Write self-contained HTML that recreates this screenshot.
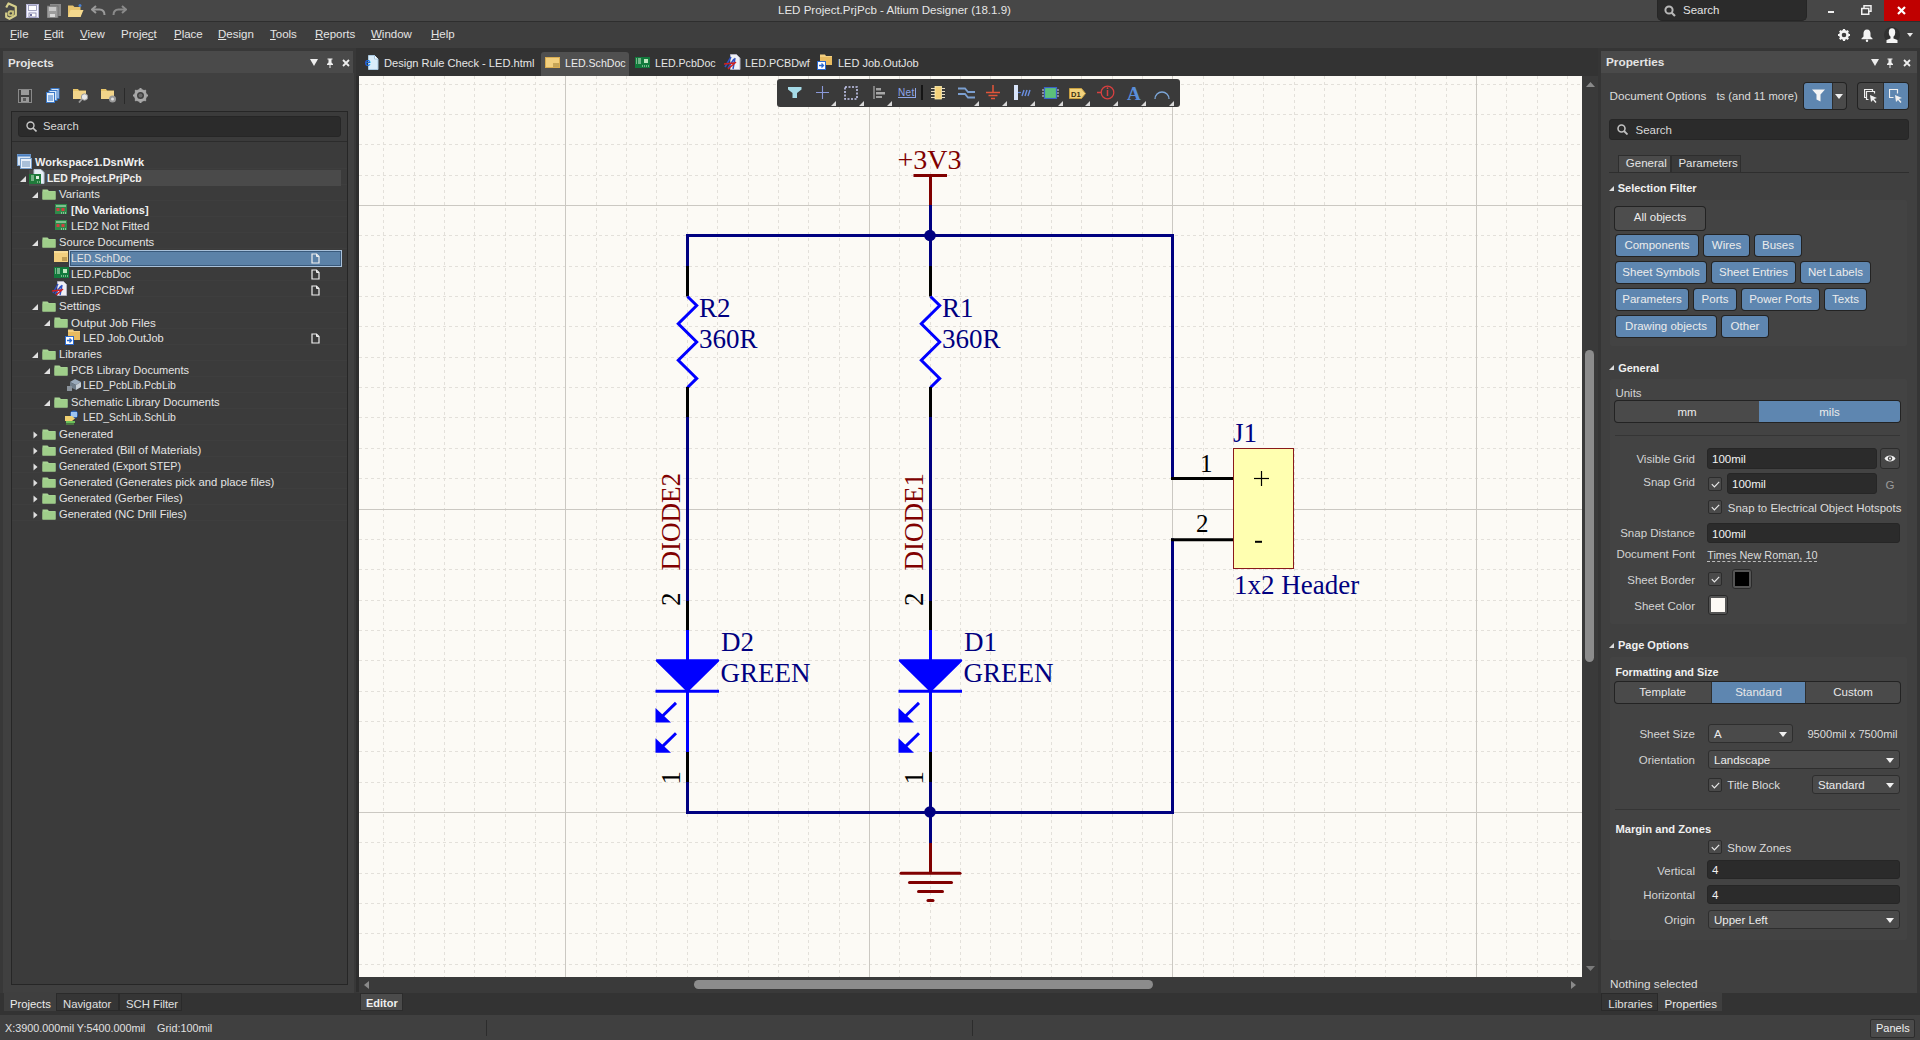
<!DOCTYPE html>
<html><head><meta charset="utf-8">
<style>
*{margin:0;padding:0;box-sizing:border-box}
html,body{width:1920px;height:1040px;overflow:hidden;background:#3c3c3c;font-family:"Liberation Sans",sans-serif;color:#e8e8e8;font-size:11.5px}
.a{position:absolute}
.t{position:absolute;white-space:nowrap;line-height:1}
</style></head><body>
<!-- title bar -->
<div class="a" style="left:0;top:0;width:1920px;height:21px;background:#474747"></div>
<div class="a" style="left:0;top:21px;width:1920px;height:1px;background:#2e2e2e"></div>
<!-- menu bar -->
<div class="a" style="left:0;top:22px;width:1920px;height:26px;background:#3e3e3e"></div>
<!-- left panel -->
<div class="a" style="left:0;top:48px;width:359px;height:945px;background:#383838"></div><div class="a" style="left:356px;top:76px;width:3px;height:916px;background:#2e2e2e"></div>
<div class="a" style="left:3px;top:51px;width:350px;height:22px;background:#4a4a4a"></div>
<div class="a" style="left:3px;top:73px;width:351px;height:920px;background:#404040"></div>
<div class="a" style="left:11px;top:111px;width:337px;height:874px;background:#3b3b3b;border:1px solid #262626"></div>
<!-- doc tab bar -->
<div class="a" style="left:356px;top:48px;width:1245px;height:28px;background:#333"></div>
<!-- canvas -->
<div class="a" style="left:1582px;top:76px;width:16px;height:917px;background:#3a3a3a"></div>
<div class="a" style="left:359px;top:977px;width:1223px;height:16px;background:#3a3a3a"></div>
<svg class="a" style="left:359px;top:76px" width="1223" height="901" viewBox="359 76 1223 901">
<rect x="359" y="76" width="1223" height="901" fill="#fcfaf5"/>
<path d="M383.5 76V977M414.5 76V977M444.5 76V977M474.5 76V977M505.5 76V977M535.5 76V977M596.5 76V977M626.5 76V977M656.5 76V977M687.5 76V977M717.5 76V977M748.5 76V977M778.5 76V977M808.5 76V977M839.5 76V977M899.5 76V977M930.5 76V977M960.5 76V977M990.5 76V977M1021.5 76V977M1051.5 76V977M1081.5 76V977M1112.5 76V977M1142.5 76V977M1203.5 76V977M1233.5 76V977M1263.5 76V977M1294.5 76V977M1324.5 76V977M1355.5 76V977M1385.5 76V977M1415.5 76V977M1446.5 76V977M1506.5 76V977M1537.5 76V977M1567.5 76V977M359 84.5H1582M359 114.5H1582M359 144.5H1582M359 175.5H1582M359 235.5H1582M359 266.5H1582M359 296.5H1582M359 326.5H1582M359 357.5H1582M359 387.5H1582M359 417.5H1582M359 448.5H1582M359 478.5H1582M359 539.5H1582M359 569.5H1582M359 600.5H1582M359 630.5H1582M359 660.5H1582M359 691.5H1582M359 721.5H1582M359 751.5H1582M359 782.5H1582M359 842.5H1582M359 873.5H1582M359 903.5H1582M359 933.5H1582M359 964.5H1582" stroke="#e3e0da" stroke-width="1" stroke-dasharray="3 3" fill="none"/>
<path d="M565.5 76V977M869.5 76V977M1172.5 76V977M1476.5 76V977M359 205.5H1582M359 509.5H1582M359 812.5H1582" stroke="#cbc8c2" stroke-width="1" fill="none"/>
<line x1="687.5" y1="235" x2="687.5" y2="266.5" stroke="#000080" stroke-width="3" stroke-linecap="butt"/>
<line x1="687.5" y1="266" x2="687.5" y2="296.5" stroke="#000000" stroke-width="3" stroke-linecap="butt"/>
<polyline points="687.5,296.5 696.7,305.5 678.3,323.7 696.7,342 678.3,360.2 696.7,378.4 687.5,387.5" fill="none" stroke="#0000ff" stroke-width="3" stroke-linejoin="miter"/>
<line x1="687.5" y1="387" x2="687.5" y2="417" stroke="#000000" stroke-width="3" stroke-linecap="butt"/>
<line x1="687.5" y1="417" x2="687.5" y2="601" stroke="#000080" stroke-width="3" stroke-linecap="butt"/>
<line x1="687.5" y1="601" x2="687.5" y2="630.5" stroke="#000000" stroke-width="3" stroke-linecap="butt"/>
<line x1="687.5" y1="630" x2="687.5" y2="752" stroke="#0000ff" stroke-width="3" stroke-linecap="butt"/>
<polygon points="657.0,660.5 718.0,660.5 687.5,690.5" fill="#0000ff" stroke="#0000ff" stroke-width="2.5" stroke-linejoin="round"/>
<line x1="655.5" y1="691.3" x2="719.0" y2="691.3" stroke="#0000ff" stroke-width="3" stroke-linecap="butt"/>
<line x1="676.0" y1="702.9" x2="661.5" y2="717" stroke="#0000ff" stroke-width="3" stroke-linecap="butt"/>
<polygon points="655.5,708.0 655.5,722.5 671.0,722.5" fill="#0000ff"/>
<line x1="676.0" y1="733.25" x2="661.5" y2="747.35" stroke="#0000ff" stroke-width="3" stroke-linecap="butt"/>
<polygon points="655.5,738.35 655.5,752.85 671.0,752.85" fill="#0000ff"/>
<line x1="687.5" y1="752" x2="687.5" y2="782.5" stroke="#000000" stroke-width="3" stroke-linecap="butt"/>
<line x1="687.5" y1="782" x2="687.5" y2="812" stroke="#000080" stroke-width="3" stroke-linecap="butt"/>
<text x="699.0" y="317" fill="#000080" font-size="27" font-family="Liberation Serif" >R2</text>
<text x="699.0" y="347.5" fill="#000080" font-size="27" font-family="Liberation Serif" >360R</text>
<text x="721.0" y="651.3" fill="#000080" font-size="27" font-family="Liberation Serif" >D2</text>
<text x="720.5" y="681.6" fill="#000080" font-size="27" font-family="Liberation Serif" >GREEN</text>
<text transform="translate(680.0,570.5) rotate(-90)" fill="#800000" font-size="27" font-family="Liberation Serif">DIODE2</text>
<text transform="translate(680.0,606) rotate(-90)" fill="#000000" font-size="27" font-family="Liberation Serif">2</text>
<text transform="translate(680.0,784.5) rotate(-90)" fill="#000000" font-size="27" font-family="Liberation Serif">1</text>
<line x1="930.5" y1="235" x2="930.5" y2="266.5" stroke="#000080" stroke-width="3" stroke-linecap="butt"/>
<line x1="930.5" y1="266" x2="930.5" y2="296.5" stroke="#000000" stroke-width="3" stroke-linecap="butt"/>
<polyline points="930.5,296.5 939.7,305.5 921.3,323.7 939.7,342 921.3,360.2 939.7,378.4 930.5,387.5" fill="none" stroke="#0000ff" stroke-width="3" stroke-linejoin="miter"/>
<line x1="930.5" y1="387" x2="930.5" y2="417" stroke="#000000" stroke-width="3" stroke-linecap="butt"/>
<line x1="930.5" y1="417" x2="930.5" y2="601" stroke="#000080" stroke-width="3" stroke-linecap="butt"/>
<line x1="930.5" y1="601" x2="930.5" y2="630.5" stroke="#000000" stroke-width="3" stroke-linecap="butt"/>
<line x1="930.5" y1="630" x2="930.5" y2="752" stroke="#0000ff" stroke-width="3" stroke-linecap="butt"/>
<polygon points="900.0,660.5 961.0,660.5 930.5,690.5" fill="#0000ff" stroke="#0000ff" stroke-width="2.5" stroke-linejoin="round"/>
<line x1="898.5" y1="691.3" x2="962.0" y2="691.3" stroke="#0000ff" stroke-width="3" stroke-linecap="butt"/>
<line x1="919.0" y1="702.9" x2="904.5" y2="717" stroke="#0000ff" stroke-width="3" stroke-linecap="butt"/>
<polygon points="898.5,708.0 898.5,722.5 914.0,722.5" fill="#0000ff"/>
<line x1="919.0" y1="733.25" x2="904.5" y2="747.35" stroke="#0000ff" stroke-width="3" stroke-linecap="butt"/>
<polygon points="898.5,738.35 898.5,752.85 914.0,752.85" fill="#0000ff"/>
<line x1="930.5" y1="752" x2="930.5" y2="782.5" stroke="#000000" stroke-width="3" stroke-linecap="butt"/>
<line x1="930.5" y1="782" x2="930.5" y2="812" stroke="#000080" stroke-width="3" stroke-linecap="butt"/>
<text x="942.0" y="317" fill="#000080" font-size="27" font-family="Liberation Serif" >R1</text>
<text x="942.0" y="347.5" fill="#000080" font-size="27" font-family="Liberation Serif" >360R</text>
<text x="964.0" y="651.3" fill="#000080" font-size="27" font-family="Liberation Serif" >D1</text>
<text x="963.5" y="681.6" fill="#000080" font-size="27" font-family="Liberation Serif" >GREEN</text>
<text transform="translate(923.0,570.5) rotate(-90)" fill="#800000" font-size="27" font-family="Liberation Serif">DIODE1</text>
<text transform="translate(923.0,606) rotate(-90)" fill="#000000" font-size="27" font-family="Liberation Serif">2</text>
<text transform="translate(923.0,784.5) rotate(-90)" fill="#000000" font-size="27" font-family="Liberation Serif">1</text>
<line x1="686" y1="235.5" x2="1173.5" y2="235.5" stroke="#000080" stroke-width="3" stroke-linecap="butt"/>
<line x1="686" y1="812.5" x2="1173.5" y2="812.5" stroke="#000080" stroke-width="3" stroke-linecap="butt"/>
<line x1="687.5" y1="234" x2="687.5" y2="266" stroke="#000080" stroke-width="3" stroke-linecap="butt"/>
<line x1="1172.5" y1="234" x2="1172.5" y2="480" stroke="#000080" stroke-width="3" stroke-linecap="butt"/>
<line x1="1172.5" y1="538.5" x2="1172.5" y2="814" stroke="#000080" stroke-width="3" stroke-linecap="butt"/>
<line x1="1171" y1="478.5" x2="1234" y2="478.5" stroke="#000000" stroke-width="3" stroke-linecap="butt"/>
<line x1="1171" y1="539.8" x2="1234" y2="539.8" stroke="#000000" stroke-width="3" stroke-linecap="butt"/>
<rect x="1233.5" y="448.5" width="60" height="120" fill="#ffffb0" stroke="#8a1a1a" stroke-width="1"/>
<text x="1200" y="471.5" fill="#000000" font-size="25" font-family="Liberation Serif" >1</text>
<text x="1196" y="531.8" fill="#000000" font-size="25" font-family="Liberation Serif" >2</text>
<line x1="1254" y1="478.5" x2="1269" y2="478.5" stroke="#000000" stroke-width="1.2" stroke-linecap="butt"/>
<line x1="1261.5" y1="471" x2="1261.5" y2="486" stroke="#000000" stroke-width="1.2" stroke-linecap="butt"/>
<line x1="1255" y1="541.8" x2="1262" y2="541.8" stroke="#000000" stroke-width="2" stroke-linecap="butt"/>
<text x="1233" y="441.5" fill="#000080" font-size="27" font-family="Liberation Serif" >J1</text>
<text x="1234" y="593.8" fill="#000080" font-size="27" font-family="Liberation Serif" >1x2 Header</text>
<line x1="929" y1="175.5" x2="932" y2="175.5" stroke="#800000" stroke-width="3" stroke-linecap="butt"/>
<line x1="913.5" y1="175.5" x2="947" y2="175.5" stroke="#800000" stroke-width="3" stroke-linecap="butt"/>
<line x1="930.5" y1="175" x2="930.5" y2="205.5" stroke="#800000" stroke-width="3" stroke-linecap="butt"/>
<line x1="930.5" y1="205" x2="930.5" y2="236" stroke="#000080" stroke-width="3" stroke-linecap="butt"/>
<text x="897.5" y="168.6" fill="#800000" font-size="28" font-family="Liberation Serif" >+3V3</text>
<circle cx="930" cy="235.5" r="5.8" fill="#000080"/>
<circle cx="930" cy="812" r="5.8" fill="#000080"/>
<line x1="930.5" y1="811" x2="930.5" y2="843.5" stroke="#000080" stroke-width="3" stroke-linecap="butt"/>
<line x1="930.5" y1="843" x2="930.5" y2="873.5" stroke="#800000" stroke-width="3" stroke-linecap="butt"/>
<line x1="901.0" y1="873.2" x2="960.0" y2="873.2" stroke="#800000" stroke-width="3" stroke-linecap="round"/>
<line x1="909.5" y1="882.4" x2="951.5" y2="882.4" stroke="#800000" stroke-width="3" stroke-linecap="round"/>
<line x1="918.5" y1="891.6" x2="942.5" y2="891.6" stroke="#800000" stroke-width="3" stroke-linecap="round"/>
<line x1="928.0" y1="900.6" x2="933.0" y2="900.6" stroke="#800000" stroke-width="3" stroke-linecap="round"/>
</svg>
<div class="a" style="left:777px;top:79px;width:403px;height:28px;background:#3a3a3a;border-radius:3px"></div>
<svg class="a" style="left:788px;top:87px" width="14" height="11" viewBox="0 0 14 11"><path d="M0 0h13.5v2.5l-4.5 3.5v5h-4.5v-5l-4.5-3.5z" fill="#a6dbe8"/></svg>
<svg class="a" style="left:816px;top:86px" width="13" height="13" viewBox="0 0 13 13"><path d="M0 6.5h13M6.5 0v13" stroke="#8a98d8" stroke-width="1.1"/></svg>
<svg class="a" style="left:831px;top:101px" width="5" height="5" viewBox="0 0 5 5"><path d="M5 0v5h-5z" fill="#d8d8d8"/></svg>
<svg class="a" style="left:844px;top:86px" width="14" height="14" viewBox="0 0 14 14"><rect x="1" y="1" width="12" height="12" fill="none" stroke="#c4c8ee" stroke-width="1.6" stroke-dasharray="2 1.5"/></svg>
<svg class="a" style="left:859px;top:101px" width="5" height="5" viewBox="0 0 5 5"><path d="M5 0v5h-5z" fill="#d8d8d8"/></svg>
<svg class="a" style="left:873px;top:86px" width="12" height="13" viewBox="0 0 12 13"><path d="M1 0v13" stroke="#909090" stroke-width="1.6"/><rect x="3" y="2" width="5" height="2.5" fill="#a0a0a0"/><rect x="3" y="6" width="9" height="2.5" fill="#a8a8a8"/><rect x="3" y="10" width="6" height="2" fill="#a0a0a0"/></svg>
<svg class="a" style="left:887px;top:101px" width="5" height="5" viewBox="0 0 5 5"><path d="M5 0v5h-5z" fill="#d8d8d8"/></svg>
<div class="t" style="left:898px;top:88px;font-size:10px;font-weight:normal;color:#8ea6e8;letter-spacing:0.3px">Net</div>
<div class="a" style="left:898px;top:97px;width:18px;height:1px;background:#8ea6e8"></div>
<div class="a" style="left:915px;top:88px;width:1px;height:10px;background:#8ea6e8"></div>
<div class="a" style="left:921px;top:85px;width:2px;height:15px;background:#151515"></div>
<svg class="a" style="left:931px;top:86px" width="14" height="14" viewBox="0 0 14 14"><rect x="4" y="0.5" width="6.5" height="12.5" fill="#f5d27a" stroke="#fff0b0" stroke-width="0.8"/><path d="M0 2.5h4M0 5.5h4M0 8.5h4M0 11.5h4M10.5 2.5h3.5M10.5 5.5h3.5M10.5 8.5h3.5M10.5 11.5h3.5" stroke="#e8dcc0" stroke-width="1"/></svg>
<svg class="a" style="left:958px;top:87px" width="17" height="12" viewBox="0 0 17 12"><path d="M0 1.5h7l3 3.5h7M0 7h7l3 3.5h7" fill="none" stroke="#7b9fd0" stroke-width="1.8"/></svg>
<svg class="a" style="left:974px;top:101px" width="5" height="5" viewBox="0 0 5 5"><path d="M5 0v5h-5z" fill="#d8d8d8"/></svg>
<svg class="a" style="left:985px;top:85px" width="16" height="15" viewBox="0 0 16 15"><path d="M8 0v7M1 7.5h14M3.5 10.5h9M6 13.5h4" stroke="#e2553a" stroke-width="1.5"/></svg>
<svg class="a" style="left:1002px;top:101px" width="5" height="5" viewBox="0 0 5 5"><path d="M5 0v5h-5z" fill="#d8d8d8"/></svg>
<svg class="a" style="left:1013px;top:85px" width="19" height="15" viewBox="0 0 19 15"><rect x="1" y="0" width="4" height="15" fill="#d8e4fa"/><path d="M5 7.5h3" stroke="#5a80d8" stroke-width="1.2"/><path d="M9 11l2-6M12 11l2-6M15 11l2-6" stroke="#6a8ee0" stroke-width="1.4"/></svg>
<svg class="a" style="left:1030px;top:101px" width="5" height="5" viewBox="0 0 5 5"><path d="M5 0v5h-5z" fill="#d8d8d8"/></svg>
<svg class="a" style="left:1042px;top:87px" width="17" height="12" viewBox="0 0 17 12"><rect x="2.5" y="0.5" width="12" height="11" fill="#5cc07a" stroke="#3a62c8" stroke-width="1.2"/><path d="M0 3h2M0 6h2M0 9h2M15 3h2M15 6h2M15 9h2" stroke="#d0d8f0"/></svg>
<svg class="a" style="left:1058px;top:101px" width="5" height="5" viewBox="0 0 5 5"><path d="M5 0v5h-5z" fill="#d8d8d8"/></svg>
<svg class="a" style="left:1069px;top:88px" width="18" height="11" viewBox="0 0 18 11"><path d="M0.5 0.5h12l4 5-4 5h-12z" fill="#f2d27c" stroke="#c8a040"/><text x="2" y="8.5" font-size="7.5" font-family="Liberation Sans" font-weight="bold" fill="#3a3010">D1</text></svg>
<svg class="a" style="left:1085px;top:101px" width="5" height="5" viewBox="0 0 5 5"><path d="M5 0v5h-5z" fill="#d8d8d8"/></svg>
<svg class="a" style="left:1097px;top:85px" width="18" height="15" viewBox="0 0 18 15"><circle cx="10.5" cy="7.5" r="6.3" fill="none" stroke="#d84040" stroke-width="1.3"/><path d="M0 7.5h4M10.5 5v6" stroke="#d84040" stroke-width="1.5"/><circle cx="10.5" cy="3.2" r="0.9" fill="#d84040"/></svg>
<svg class="a" style="left:1113px;top:101px" width="5" height="5" viewBox="0 0 5 5"><path d="M5 0v5h-5z" fill="#d8d8d8"/></svg>
<div class="t" style="left:1127px;top:84px;font-family:'Liberation Serif';font-size:19px;font-weight:bold;color:#5a8ed8">A</div>
<svg class="a" style="left:1141px;top:101px" width="5" height="5" viewBox="0 0 5 5"><path d="M5 0v5h-5z" fill="#d8d8d8"/></svg>
<svg class="a" style="left:1154px;top:86px" width="16" height="13" viewBox="0 0 16 13"><path d="M1 13a7 7 0 0 1 14 0" fill="none" stroke="#7ca6d8" stroke-width="1.3"/></svg>
<svg class="a" style="left:1169px;top:101px" width="5" height="5" viewBox="0 0 5 5"><path d="M5 0v5h-5z" fill="#d8d8d8"/></svg>
<svg class="a" style="left:1586px;top:82px" width="9" height="5" viewBox="0 0 9 5"><path d="M0 5l4.5-5 4.5 5z" fill="#8a8a8a"/></svg>
<div class="a" style="left:1585px;top:350px;width:9px;height:312px;background:#8c8c8c;border-radius:4.5px"></div>
<svg class="a" style="left:1586px;top:966px" width="9" height="5" viewBox="0 0 9 5"><path d="M0 0h9l-4.5 5z" fill="#7a7a7a"/></svg>
<svg class="a" style="left:364px;top:981px" width="5" height="8" viewBox="0 0 5 8"><path d="M5 0v8l-5-4z" fill="#8a8a8a"/></svg>
<div class="a" style="left:694px;top:980px;width:459px;height:9px;background:#8c8c8c;border-radius:4.5px"></div>
<svg class="a" style="left:1571px;top:981px" width="5" height="8" viewBox="0 0 5 8"><path d="M0 0v8l5-4z" fill="#8a8a8a"/></svg>
<!-- scrollbars -->
<!-- bottom tabs -->
<div class="a" style="left:0;top:993px;width:1920px;height:22px;background:#333"></div>
<!-- status bar -->
<div class="a" style="left:0;top:1015px;width:1920px;height:25px;background:#404040"></div>
<div class="t" style="left:8px;top:56.5px;font-size:11.6px;font-weight:bold;color:#e4e4e4">Projects</div>
<svg class="a" style="left:310px;top:59px" width="8" height="7" viewBox="0 0 8 7"><path d="M0 0h8l-4 7z" fill="#eee"/></svg>
<svg class="a" style="left:326px;top:58px" width="8" height="10" viewBox="0 0 8 10"><path d="M1.5 0.5h5v1h-1v3l1.5 1.5v1h-6v-1l1.5-1.5v-3h-1z" fill="#eee"/><path d="M4 7v3" stroke="#eee"/></svg>
<svg class="a" style="left:342px;top:59px" width="8" height="8" viewBox="0 0 8 8"><path d="M1 1l6 6M7 1l-6 6" stroke="#eee" stroke-width="1.8"/></svg>
<svg class="a" style="left:18px;top:89px" width="14" height="14" viewBox="0 0 14 14"><rect x="0.5" y="0.5" width="13" height="13" fill="none" stroke="#8a8a8a"/><rect x="3" y="1" width="8" height="5" fill="#9a9a9a"/><rect x="3" y="8" width="8" height="5" fill="#9a9a9a"/><rect x="5" y="9" width="3" height="3" fill="#5a5a5a"/></svg>
<svg class="a" style="left:46px;top:88px" width="14" height="15" viewBox="0 0 14 15"><rect x="5" y="0.5" width="8" height="10" fill="#cfe0f5" stroke="#3a78c8"/><rect x="3" y="2.5" width="8" height="10" fill="#d8e8f8" stroke="#3a78c8"/><rect x="0.5" y="4.5" width="8" height="10" fill="#e8f2fc" stroke="#3a78c8"/><path d="M2 8h5M2 10h5M2 12h5" stroke="#3a78c8"/></svg>
<svg class="a" style="left:73px;top:88px" width="16" height="15" viewBox="0 0 16 15"><path d="M0 1h5l1 1.5h7v8.5h-13z" fill="#e8c56a"/><rect x="0" y="3" width="13" height="8" fill="#f3d58a"/><circle cx="11.5" cy="9" r="3.2" fill="#e8e8e8" stroke="#9a9a9a"/><path d="M9 11l-3 3.5" stroke="#9a9a9a" stroke-width="1.8"/></svg>
<svg class="a" style="left:101px;top:88px" width="16" height="15" viewBox="0 0 16 15"><path d="M0 1h5l1 1.5h7v8.5h-13z" fill="#e8c56a"/><rect x="0" y="3" width="13" height="8" fill="#f3d58a"/><circle cx="11.5" cy="11" r="3.5" fill="#9a9a9a"/><circle cx="11.5" cy="11" r="1.5" fill="#e0e0e0"/></svg>
<div class="a" style="left:124px;top:88px;width:1px;height:16px;background:#2a2a2a"></div>
<svg class="a" style="left:133px;top:88px" width="15" height="15" viewBox="0 0 15 15"><circle cx="7.5" cy="7.5" r="5" fill="none" stroke="#a8a8a8" stroke-width="3"/><path d="M7.5 0v3M7.5 12v3M0 7.5h3M12 7.5h3M2.2 2.2l2 2M10.8 10.8l2 2M2.2 12.8l2-2M10.8 4.2l2-2" stroke="#a8a8a8" stroke-width="2"/><circle cx="7.5" cy="7.5" r="2" fill="#6a6a6a"/></svg>
<div class="a" style="left:18px;top:116px;width:323px;height:21px;background:#2b2b2b;border-radius:3px;border:1px solid #262626"></div>
<svg class="a" style="left:26px;top:121px" width="11" height="11" viewBox="0 0 11 11"><circle cx="4.5" cy="4.5" r="3.5" fill="none" stroke="#c8c8c8" stroke-width="1.4"/><path d="M7 7l3.5 3.5" stroke="#c8c8c8" stroke-width="1.6"/></svg>
<div class="t" style="left:43px;top:121px;font-size:11.3px;color:#d8d8d8">Search</div>
<div class="a" style="left:12px;top:141px;width:335px;height:1px;background:#2c2c2c"></div>
<div class="a" style="left:12px;top:168px;width:335px;height:1px;background:#3e3e3e"></div>
<div class="a" style="left:12px;top:184px;width:335px;height:1px;background:#3e3e3e"></div>
<div class="a" style="left:12px;top:200px;width:335px;height:1px;background:#3e3e3e"></div>
<div class="a" style="left:12px;top:216px;width:335px;height:1px;background:#3e3e3e"></div>
<div class="a" style="left:12px;top:232px;width:335px;height:1px;background:#3e3e3e"></div>
<div class="a" style="left:12px;top:248px;width:335px;height:1px;background:#3e3e3e"></div>
<div class="a" style="left:12px;top:264px;width:335px;height:1px;background:#3e3e3e"></div>
<div class="a" style="left:12px;top:280px;width:335px;height:1px;background:#3e3e3e"></div>
<div class="a" style="left:12px;top:296px;width:335px;height:1px;background:#3e3e3e"></div>
<div class="a" style="left:12px;top:312px;width:335px;height:1px;background:#3e3e3e"></div>
<div class="a" style="left:12px;top:328px;width:335px;height:1px;background:#3e3e3e"></div>
<div class="a" style="left:12px;top:344px;width:335px;height:1px;background:#3e3e3e"></div>
<div class="a" style="left:12px;top:360px;width:335px;height:1px;background:#3e3e3e"></div>
<div class="a" style="left:12px;top:376px;width:335px;height:1px;background:#3e3e3e"></div>
<div class="a" style="left:12px;top:392px;width:335px;height:1px;background:#3e3e3e"></div>
<div class="a" style="left:12px;top:408px;width:335px;height:1px;background:#3e3e3e"></div>
<div class="a" style="left:12px;top:424px;width:335px;height:1px;background:#3e3e3e"></div>
<div class="a" style="left:12px;top:440px;width:335px;height:1px;background:#3e3e3e"></div>
<div class="a" style="left:12px;top:456px;width:335px;height:1px;background:#3e3e3e"></div>
<div class="a" style="left:12px;top:472px;width:335px;height:1px;background:#3e3e3e"></div>
<div class="a" style="left:12px;top:488px;width:335px;height:1px;background:#3e3e3e"></div>
<div class="a" style="left:12px;top:504px;width:335px;height:1px;background:#3e3e3e"></div>
<div class="a" style="left:12px;top:520px;width:335px;height:1px;background:#3e3e3e"></div>
<div class="a" style="left:29px;top:170px;width:312px;height:16px;background:#4a4a4a"></div>
<div class="a" style="left:69px;top:250px;width:273px;height:17px;background:#5c82a8;border:1px solid #a9c1da;box-shadow:inset 0 0 0 1px #3a5a7c"></div>
<div class="t" style="left:35px;top:157px;font-size:11px;font-weight:bold;color:#f0f0f0">Workspace1.DsnWrk</div>
<svg class="a" style="left:17px;top:154px" width="16" height="16" viewBox="0 0 16 16"><rect x="0.5" y="0.5" width="13" height="11" fill="#d8e6f5" stroke="#7aa0cc"/><rect x="0.5" y="0.5" width="13" height="2" fill="#4a7fc0"/><rect x="3.5" y="4.5" width="11" height="10" fill="#e8f0fa" stroke="#7aa0cc"/><path d="M5 8h8M5 10h8M5 12h8" stroke="#6a8fb8"/></svg>
<div class="t" style="left:47px;top:174px;font-size:10.4px;font-weight:bold;color:#f0f0f0">LED Project.PrjPcb</div>
<svg class="a" style="left:20px;top:176px" width="6" height="6" viewBox="0 0 6 6"><path d="M6 0v6h-6z" fill="#e0e0e0"/></svg>
<svg class="a" style="left:29px;top:169px" width="16" height="16" viewBox="0 0 16 16"><path d="M5 0.5h7l3 3v11h-10z" fill="#e8eef5" stroke="#b8c8d8"/><rect x="0" y="5" width="12" height="10" fill="#1f7a3a"/><path d="M2 7h3M2 9h3M2 11h3M8 13h1M10 13h1" stroke="#cfe8cf"/><rect x="7" y="7" width="3" height="3" fill="#dff0df"/></svg>
<div class="t" style="left:59px;top:189px;font-size:11.4px;font-weight:normal;color:#e4e4e4">Variants</div>
<svg class="a" style="left:32px;top:192px" width="6" height="6" viewBox="0 0 6 6"><path d="M6 0v6h-6z" fill="#e0e0e0"/></svg>
<svg class="a" style="left:42px;top:188px" width="14" height="12" viewBox="0 0 14 12"><path d="M0.5 1.5h5l1.5 1.5h6.5v8.5h-13z" fill="#a9d595"/><path d="M0.5 3.5h13v8h-13z" fill="#9fce8a"/></svg>
<div class="t" style="left:71px;top:205px;font-size:11px;font-weight:bold;color:#f0f0f0">[No Variations]</div>
<svg class="a" style="left:55px;top:204px" width="13" height="11" viewBox="0 0 13 11"><rect x="0" y="0" width="12" height="10" fill="#2e8a4a"/><rect x="1" y="1" width="10" height="2" fill="#7fbf8f"/><rect x="1.5" y="4" width="3" height="3" fill="#d04040"/><rect x="6.5" y="4" width="3" height="3" fill="#d04040"/><path d="M6 9h1M8 9h1M10 9h1" stroke="#e0f0e0"/></svg>
<div class="t" style="left:71px;top:221px;font-size:11px;font-weight:normal;color:#e4e4e4">LED2 Not Fitted</div>
<svg class="a" style="left:55px;top:220px" width="13" height="11" viewBox="0 0 13 11"><rect x="0" y="0" width="12" height="10" fill="#2e8a4a"/><rect x="1" y="1" width="10" height="2" fill="#7fbf8f"/><rect x="1.5" y="4" width="3" height="3" fill="#d04040"/><rect x="6.5" y="4" width="3" height="3" fill="#d04040"/><path d="M6 9h1M8 9h1M10 9h1" stroke="#e0f0e0"/></svg>
<div class="t" style="left:59px;top:237px;font-size:11.2px;font-weight:normal;color:#e4e4e4">Source Documents</div>
<svg class="a" style="left:32px;top:240px" width="6" height="6" viewBox="0 0 6 6"><path d="M6 0v6h-6z" fill="#e0e0e0"/></svg>
<svg class="a" style="left:42px;top:236px" width="14" height="12" viewBox="0 0 14 12"><path d="M0.5 1.5h5l1.5 1.5h6.5v8.5h-13z" fill="#a9d595"/><path d="M0.5 3.5h13v8h-13z" fill="#9fce8a"/></svg>
<div class="t" style="left:71px;top:253px;font-size:10.5px;font-weight:normal;color:#e4e4e4">LED.SchDoc</div>
<svg class="a" style="left:54px;top:251px" width="15" height="12" viewBox="0 0 15 12"><rect x="0" y="0" width="14" height="11" fill="#f2cf7e"/><rect x="0" y="0" width="14" height="2" fill="#f7dc98"/><path d="M8 7h5M8 9h5" stroke="#8a6a2a"/></svg>
<svg class="a" style="left:311px;top:253px" width="9" height="11" viewBox="0 0 9 11"><path d="M1 1h4.5l2.5 2.5v6.5h-7z" fill="none" stroke="#f0f0f0" stroke-width="1.2"/><path d="M5.5 1v2.5h2.5" fill="none" stroke="#f0f0f0" stroke-width="1"/></svg>
<div class="t" style="left:71px;top:269px;font-size:10.5px;font-weight:normal;color:#e4e4e4">LED.PcbDoc</div>
<svg class="a" style="left:54px;top:267px" width="15" height="12" viewBox="0 0 15 12"><rect x="0" y="0" width="15" height="11" fill="#127a3c"/><path d="M1 2h1M1 4h1M1 6h1M3 2h3M3 4h3M3 6h3M7 9h1M9 9h1M11 9h1M13 9h1" stroke="#d8f0d8"/><rect x="9" y="2" width="4" height="4" fill="#bfe6bf"/></svg>
<svg class="a" style="left:311px;top:269px" width="9" height="11" viewBox="0 0 9 11"><path d="M1 1h4.5l2.5 2.5v6.5h-7z" fill="none" stroke="#f0f0f0" stroke-width="1.2"/><path d="M5.5 1v2.5h2.5" fill="none" stroke="#f0f0f0" stroke-width="1"/></svg>
<div class="t" style="left:71px;top:285px;font-size:10.5px;font-weight:normal;color:#e4e4e4">LED.PCBDwf</div>
<svg class="a" style="left:52px;top:281px" width="16" height="16" viewBox="0 0 16 16"><path d="M5.5 0.5h6l3 3v11h-9z" fill="#f0f0f5" stroke="#b0b0c0"/><path d="M1 12l5-9M3 13l6-8M8 14l2-10" stroke="#3050c0" stroke-width="1.5"/><path d="M0 10l9-1M4 14l7-6" stroke="#d02020" stroke-width="1.5"/></svg>
<svg class="a" style="left:311px;top:285px" width="9" height="11" viewBox="0 0 9 11"><path d="M1 1h4.5l2.5 2.5v6.5h-7z" fill="none" stroke="#f0f0f0" stroke-width="1.2"/><path d="M5.5 1v2.5h2.5" fill="none" stroke="#f0f0f0" stroke-width="1"/></svg>
<div class="t" style="left:59px;top:301px;font-size:11.5px;font-weight:normal;color:#e4e4e4">Settings</div>
<svg class="a" style="left:32px;top:304px" width="6" height="6" viewBox="0 0 6 6"><path d="M6 0v6h-6z" fill="#e0e0e0"/></svg>
<svg class="a" style="left:42px;top:300px" width="14" height="12" viewBox="0 0 14 12"><path d="M0.5 1.5h5l1.5 1.5h6.5v8.5h-13z" fill="#a9d595"/><path d="M0.5 3.5h13v8h-13z" fill="#9fce8a"/></svg>
<div class="t" style="left:71px;top:317px;font-size:11.65px;font-weight:normal;color:#e4e4e4">Output Job Files</div>
<svg class="a" style="left:44px;top:320px" width="6" height="6" viewBox="0 0 6 6"><path d="M6 0v6h-6z" fill="#e0e0e0"/></svg>
<svg class="a" style="left:54px;top:316px" width="14" height="12" viewBox="0 0 14 12"><path d="M0.5 1.5h5l1.5 1.5h6.5v8.5h-13z" fill="#a9d595"/><path d="M0.5 3.5h13v8h-13z" fill="#9fce8a"/></svg>
<div class="t" style="left:83px;top:333px;font-size:11px;font-weight:normal;color:#e4e4e4">LED Job.OutJob</div>
<svg class="a" style="left:65px;top:329px" width="16" height="16" viewBox="0 0 16 16"><path d="M3 0.5h5l1 1.5h6v9h-12z" fill="#f3cf80"/><rect x="3" y="3" width="12" height="8" fill="#e8bb60"/><rect x="0.5" y="7.5" width="8" height="8" fill="#ffffff" stroke="#2a6ad0"/><path d="M2 11.5h4M4.5 9.5l2 2-2 2" stroke="#2a6ad0" stroke-width="1.3" fill="none"/></svg>
<svg class="a" style="left:311px;top:333px" width="9" height="11" viewBox="0 0 9 11"><path d="M1 1h4.5l2.5 2.5v6.5h-7z" fill="none" stroke="#f0f0f0" stroke-width="1.2"/><path d="M5.5 1v2.5h2.5" fill="none" stroke="#f0f0f0" stroke-width="1"/></svg>
<div class="t" style="left:59px;top:349px;font-size:11.2px;font-weight:normal;color:#e4e4e4">Libraries</div>
<svg class="a" style="left:32px;top:352px" width="6" height="6" viewBox="0 0 6 6"><path d="M6 0v6h-6z" fill="#e0e0e0"/></svg>
<svg class="a" style="left:42px;top:348px" width="14" height="12" viewBox="0 0 14 12"><path d="M0.5 1.5h5l1.5 1.5h6.5v8.5h-13z" fill="#a9d595"/><path d="M0.5 3.5h13v8h-13z" fill="#9fce8a"/></svg>
<div class="t" style="left:71px;top:365px;font-size:11px;font-weight:normal;color:#e4e4e4">PCB Library Documents</div>
<svg class="a" style="left:44px;top:368px" width="6" height="6" viewBox="0 0 6 6"><path d="M6 0v6h-6z" fill="#e0e0e0"/></svg>
<svg class="a" style="left:54px;top:364px" width="14" height="12" viewBox="0 0 14 12"><path d="M0.5 1.5h5l1.5 1.5h6.5v8.5h-13z" fill="#a9d595"/><path d="M0.5 3.5h13v8h-13z" fill="#9fce8a"/></svg>
<div class="t" style="left:83px;top:381px;font-size:10.44px;font-weight:normal;color:#e4e4e4">LED_PcbLib.PcbLib</div>
<svg class="a" style="left:67px;top:378px" width="14" height="13" viewBox="0 0 14 13"><path d="M3 4l5-3 6 3-5 3z" fill="#9aaabb"/><path d="M3 4v5l6 3v-5z" fill="#6f7d8a"/><path d="M9 7l5-3v5l-5 3z" fill="#c5cdd5"/><rect x="0" y="8" width="5" height="5" fill="#8a939c"/></svg>
<div class="t" style="left:71px;top:397px;font-size:11.15px;font-weight:normal;color:#e4e4e4">Schematic Library Documents</div>
<svg class="a" style="left:44px;top:400px" width="6" height="6" viewBox="0 0 6 6"><path d="M6 0v6h-6z" fill="#e0e0e0"/></svg>
<svg class="a" style="left:54px;top:396px" width="14" height="12" viewBox="0 0 14 12"><path d="M0.5 1.5h5l1.5 1.5h6.5v8.5h-13z" fill="#a9d595"/><path d="M0.5 3.5h13v8h-13z" fill="#9fce8a"/></svg>
<div class="t" style="left:83px;top:413px;font-size:10.44px;font-weight:normal;color:#e4e4e4">LED_SchLib.SchLib</div>
<svg class="a" style="left:65px;top:410px" width="14" height="15" viewBox="0 0 14 15"><circle cx="9" cy="4.5" r="4" fill="#2a60b0"/><rect x="6" y="2" width="6" height="5" fill="#9cc4f0"/><path d="M0 6h7l3 2.5-3 2.5h-7z" fill="#f0d070"/><path d="M2 12v3M4 12v3M6 12v3M8 12v3" stroke="#5ab04a"/><rect x="1" y="11" width="9" height="2" fill="#6ac05a"/></svg>
<div class="t" style="left:59px;top:429px;font-size:11.47px;font-weight:normal;color:#e4e4e4">Generated</div>
<svg class="a" style="left:33px;top:431px" width="5" height="8" viewBox="0 0 5 8"><path d="M0.5 0.5l4 3.5-4 3.5z" fill="#e0e0e0"/></svg>
<svg class="a" style="left:42px;top:428px" width="14" height="12" viewBox="0 0 14 12"><path d="M0.5 1.5h5l1.5 1.5h6.5v8.5h-13z" fill="#a9d595"/><path d="M0.5 3.5h13v8h-13z" fill="#9fce8a"/></svg>
<div class="t" style="left:59px;top:445px;font-size:11.43px;font-weight:normal;color:#e4e4e4">Generated (Bill of Materials)</div>
<svg class="a" style="left:33px;top:447px" width="5" height="8" viewBox="0 0 5 8"><path d="M0.5 0.5l4 3.5-4 3.5z" fill="#e0e0e0"/></svg>
<svg class="a" style="left:42px;top:444px" width="14" height="12" viewBox="0 0 14 12"><path d="M0.5 1.5h5l1.5 1.5h6.5v8.5h-13z" fill="#a9d595"/><path d="M0.5 3.5h13v8h-13z" fill="#9fce8a"/></svg>
<div class="t" style="left:59px;top:461px;font-size:10.66px;font-weight:normal;color:#e4e4e4">Generated (Export STEP)</div>
<svg class="a" style="left:33px;top:463px" width="5" height="8" viewBox="0 0 5 8"><path d="M0.5 0.5l4 3.5-4 3.5z" fill="#e0e0e0"/></svg>
<svg class="a" style="left:42px;top:460px" width="14" height="12" viewBox="0 0 14 12"><path d="M0.5 1.5h5l1.5 1.5h6.5v8.5h-13z" fill="#a9d595"/><path d="M0.5 3.5h13v8h-13z" fill="#9fce8a"/></svg>
<div class="t" style="left:59px;top:477px;font-size:11.3px;font-weight:normal;color:#e4e4e4">Generated (Generates pick and place files)</div>
<svg class="a" style="left:33px;top:479px" width="5" height="8" viewBox="0 0 5 8"><path d="M0.5 0.5l4 3.5-4 3.5z" fill="#e0e0e0"/></svg>
<svg class="a" style="left:42px;top:476px" width="14" height="12" viewBox="0 0 14 12"><path d="M0.5 1.5h5l1.5 1.5h6.5v8.5h-13z" fill="#a9d595"/><path d="M0.5 3.5h13v8h-13z" fill="#9fce8a"/></svg>
<div class="t" style="left:59px;top:493px;font-size:11.08px;font-weight:normal;color:#e4e4e4">Generated (Gerber Files)</div>
<svg class="a" style="left:33px;top:495px" width="5" height="8" viewBox="0 0 5 8"><path d="M0.5 0.5l4 3.5-4 3.5z" fill="#e0e0e0"/></svg>
<svg class="a" style="left:42px;top:492px" width="14" height="12" viewBox="0 0 14 12"><path d="M0.5 1.5h5l1.5 1.5h6.5v8.5h-13z" fill="#a9d595"/><path d="M0.5 3.5h13v8h-13z" fill="#9fce8a"/></svg>
<div class="t" style="left:59px;top:509px;font-size:11.12px;font-weight:normal;color:#e4e4e4">Generated (NC Drill Files)</div>
<svg class="a" style="left:33px;top:511px" width="5" height="8" viewBox="0 0 5 8"><path d="M0.5 0.5l4 3.5-4 3.5z" fill="#e0e0e0"/></svg>
<svg class="a" style="left:42px;top:508px" width="14" height="12" viewBox="0 0 14 12"><path d="M0.5 1.5h5l1.5 1.5h6.5v8.5h-13z" fill="#a9d595"/><path d="M0.5 3.5h13v8h-13z" fill="#9fce8a"/></svg>
<div class="a" style="left:4px;top:992px;width:52px;height:19px;background:#3f3f3f"></div>
<div class="t" style="left:10px;top:999px;font-size:11.3px;color:#ececec">Projects</div>
<div class="a" style="left:56px;top:993px;width:63px;height:18px;background:#353535;border:1px solid #2a2a2a"></div>
<div class="t" style="left:63px;top:999px;font-size:11.3px;color:#e0e0e0">Navigator</div>
<div class="a" style="left:119px;top:993px;width:63px;height:18px;background:#353535;border:1px solid #2a2a2a"></div>
<div class="t" style="left:126px;top:999px;font-size:11.3px;color:#e0e0e0">SCH Filter</div>
<svg class="a" style="left:5px;top:2px" width="12" height="18" viewBox="0 0 12 18"><path d="M1.2 5.5L3.5 1.5L10.8 4.8V13.2L4.5 16.8L1.2 15V10.5" fill="none" stroke="#d6cf8c" stroke-width="2.2" stroke-linejoin="round"/><path d="M8 8.5V12.5M8 10.2c-1-1.5-4.5-1.5-4.5 1.2c0 2.5 3.5 2.5 4.5 0.8" fill="none" stroke="#c9c27a" stroke-width="1.9"/></svg>
<svg class="a" style="left:26px;top:4px" width="13" height="14" viewBox="0 0 13 14"><rect x="0.5" y="0.5" width="12" height="13" fill="#f4f4ff" stroke="#b8b8d8"/><rect x="2.5" y="1.5" width="8" height="5" fill="#ffffff" stroke="#9090b0" stroke-width="0.8"/><rect x="3" y="9" width="7" height="4" fill="#ffffff" stroke="#7a7aa0" stroke-width="0.8"/><rect x="4" y="10" width="2" height="2" fill="#7070a0"/></svg>
<svg class="a" style="left:47px;top:4px" width="14" height="14" viewBox="0 0 14 14"><rect x="3" y="0" width="11" height="12" fill="#8a8a8a"/><rect x="0" y="2" width="11" height="12" fill="#9c9c9c" stroke="#6a6a6a" stroke-width="0.8"/><rect x="2" y="3" width="7" height="4" fill="#c8c8c8"/><rect x="3" y="10" width="5" height="3" fill="#d8d8d8"/></svg>
<svg class="a" style="left:68px;top:3px" width="16" height="15" viewBox="0 0 16 15"><path d="M0 2.5h5l1.5 1.5h6v10h-12.5z" fill="#e8c46e"/><path d="M2.5 7h13l-3 7h-12.5z" fill="#f5d98e"/><circle cx="12" cy="2.5" r="1.5" fill="#4a80d0"/></svg>
<svg class="a" style="left:91px;top:5px" width="15" height="11" viewBox="0 0 15 11"><path d="M5 1l-4 3.5 4 3.5" fill="none" stroke="#9a9a9a" stroke-width="2"/><path d="M1.5 4.5h7c3 0 5 2 5 5.5" fill="none" stroke="#9a9a9a" stroke-width="2"/></svg>
<svg class="a" style="left:112px;top:5px" width="15" height="11" viewBox="0 0 15 11"><path d="M10 1l4 3.5-4 3.5" fill="none" stroke="#8a8a8a" stroke-width="2"/><path d="M13.5 4.5h-7c-3 0-5 2-5 5.5" fill="none" stroke="#8a8a8a" stroke-width="2"/></svg>
<div class="t" style="left:778px;top:5px;font-size:11.55px;color:#e6e6e6">LED Project.PrjPcb - Altium Designer (18.1.9)</div>
<div class="a" style="left:1657px;top:0;width:150px;height:21px;background:#2b2b2b;border-radius:0 0 5px 5px;border:1px solid #262626;border-top:none"></div>
<svg class="a" style="left:1664px;top:5px" width="12" height="12" viewBox="0 0 12 12"><circle cx="5" cy="5" r="3.6" fill="none" stroke="#b8b8b8" stroke-width="2"/><path d="M7.5 7.5l3.5 3.5" stroke="#b8b8b8" stroke-width="2.2"/></svg>
<div class="t" style="left:1683px;top:5px;font-size:11.5px;color:#e4e4e4">Search</div>
<div class="a" style="left:1828px;top:11px;width:6px;height:2px;background:#f0f0f0"></div>
<svg class="a" style="left:1861px;top:5px" width="11" height="10" viewBox="0 0 11 10"><rect x="3" y="0.75" width="7" height="5.5" fill="none" stroke="#f0f0f0" stroke-width="1.5"/><rect x="0.75" y="3.5" width="7" height="5.75" fill="#474747" stroke="#f0f0f0" stroke-width="1.5"/></svg>
<div class="a" style="left:1884px;top:0;width:36px;height:21px;background:#c00000"></div>
<svg class="a" style="left:1897px;top:6px" width="9" height="9" viewBox="0 0 9 9"><path d="M1 1l7 7M8 1l-7 7" stroke="#ffffff" stroke-width="2.2"/></svg>
<div class="t" style="left:10px;top:29px;font-size:11.5px;color:#e4e4e4"><span style="text-decoration:underline">F</span>ile</div>
<div class="t" style="left:44px;top:29px;font-size:11.5px;color:#e4e4e4"><span style="text-decoration:underline">E</span>dit</div>
<div class="t" style="left:80px;top:29px;font-size:11.5px;color:#e4e4e4"><span style="text-decoration:underline">V</span>iew</div>
<div class="t" style="left:121px;top:29px;font-size:11.5px;color:#e4e4e4">Proje<span style="text-decoration:underline">c</span>t</div>
<div class="t" style="left:174px;top:29px;font-size:11.5px;color:#e4e4e4"><span style="text-decoration:underline">P</span>lace</div>
<div class="t" style="left:218px;top:29px;font-size:11.5px;color:#e4e4e4"><span style="text-decoration:underline">D</span>esign</div>
<div class="t" style="left:270px;top:29px;font-size:11.5px;color:#e4e4e4"><span style="text-decoration:underline">T</span>ools</div>
<div class="t" style="left:315px;top:29px;font-size:11.5px;color:#e4e4e4"><span style="text-decoration:underline">R</span>eports</div>
<div class="t" style="left:371px;top:29px;font-size:11.5px;color:#e4e4e4"><span style="text-decoration:underline">W</span>indow</div>
<div class="t" style="left:431px;top:29px;font-size:11.5px;color:#e4e4e4"><span style="text-decoration:underline">H</span>elp</div>
<svg class="a" style="left:1838px;top:29px" width="12" height="12" viewBox="0 0 12 12"><circle cx="6" cy="6" r="3.6" fill="none" stroke="#f4f4f4" stroke-width="2.6"/><path d="M6 0v3M6 9v3M0 6h3M9 6h3M1.8 1.8l2 2M8.2 8.2l2 2M1.8 10.2l2-2M8.2 3.8l2-2" stroke="#f4f4f4" stroke-width="2.2"/></svg>
<svg class="a" style="left:1861px;top:29px" width="12" height="13" viewBox="0 0 12 13"><path d="M6 0.5c-2.5 0-3.5 2-3.5 4v3l-2 2v0.8h11v-0.8l-2-2v-3c0-2-1-4-3.5-4z" fill="#f4f4f4"/><circle cx="6" cy="11.8" r="1.2" fill="#f4f4f4"/></svg>
<div class="a" style="left:1884px;top:27px;width:16px;height:16px;border-radius:8px;background:#303030"></div>
<svg class="a" style="left:1886px;top:28px" width="12" height="15" viewBox="0 0 12 15"><ellipse cx="6" cy="4.5" rx="3.2" ry="4.2" fill="#f4f4f4"/><path d="M4.5 8h3v2.5l4 1.5v3h-11v-3l4-1.5z" fill="#f4f4f4"/></svg>
<svg class="a" style="left:1907px;top:33px" width="6" height="4" viewBox="0 0 6 4"><path d="M0 0h6l-3 4z" fill="#e8e8e8"/></svg>
<div class="a" style="left:541px;top:52px;width:88px;height:24px;background:#505050;border-radius:3px 3px 0 0"></div>
<svg class="a" style="left:365px;top:55px" width="14" height="15" viewBox="0 0 14 15"><path d="M3.5 0.5h6l3.5 3.5v10.5h-9.5z" fill="#d8ecfa" stroke="#a8c8e0"/><path d="M9.5 0.5v3.5h3.5" fill="#ffffff" stroke="#a8c8e0"/><text x="0" y="11" font-family="Liberation Sans" font-weight="bold" font-size="10" fill="#1a6ad8">e</text></svg>
<div class="t" style="left:384px;top:58px;font-size:11.1px;color:#e6e6e6">Design Rule Check - LED.html</div>
<svg class="a" style="left:545px;top:57px" width="15" height="11" viewBox="0 0 15 11"><rect x="0" y="0" width="15" height="11" fill="#f2cf7e"/><rect x="0.5" y="0.5" width="14" height="10" fill="none" stroke="#d9ac50"/><path d="M8 7h6M8 9h6" stroke="#9a7a30"/></svg>
<div class="t" style="left:565px;top:58px;font-size:10.6px;color:#ececec">LED.SchDoc</div>
<svg class="a" style="left:635px;top:57px" width="15" height="11" viewBox="0 0 15 11"><rect x="0" y="0" width="15" height="11" fill="#127a3c"/><path d="M1 2h1M1 4h1M1 6h1M3 2h3M3 4h3M3 6h3M7 9h1M9 9h1M11 9h1M13 9h1" stroke="#d8f0d8"/><rect x="9" y="2" width="4" height="4" fill="#bfe6bf"/></svg>
<div class="t" style="left:655px;top:58px;font-size:10.6px;color:#e6e6e6">LED.PcbDoc</div>
<svg class="a" style="left:724px;top:54px" width="17" height="16" viewBox="0 0 17 16"><path d="M6.5 0.5h6l3.5 3.5v11.5h-9.5z" fill="#f0f0f5" stroke="#b0b0c0"/><path d="M1 13l6-10M4 14l6-9M9 15l2-11" stroke="#3050c0" stroke-width="1.5"/><path d="M0 10l10-1M4 15l8-7" stroke="#d02020" stroke-width="1.5"/></svg>
<div class="t" style="left:745px;top:58px;font-size:10.8px;color:#e6e6e6">LED.PCBDwf</div>
<svg class="a" style="left:817px;top:54px" width="16" height="16" viewBox="0 0 16 16"><path d="M3 0.5h5l1 1.5h6v9h-12z" fill="#f3cf80"/><rect x="3" y="3" width="12" height="8" fill="#e8bb60"/><rect x="0.5" y="7.5" width="8" height="8" fill="#ffffff" stroke="#2a6ad0"/><path d="M2 11.5h4M4.5 9.5l2 2-2 2" stroke="#2a6ad0" stroke-width="1.3" fill="none"/></svg>
<div class="t" style="left:838px;top:58px;font-size:11px;color:#e6e6e6">LED Job.OutJob</div>
<div class="a" style="left:360px;top:993px;width:43px;height:18px;background:#4b4b4b;border:1px solid #2c2c2c"></div>
<div class="t" style="left:366px;top:998px;font-size:11px;font-weight:bold;color:#f0f0f0">Editor</div>
<div class="t" style="left:5px;top:1023px;font-size:10.8px;color:#e0e0e0">X:3900.000mil Y:5400.000mil</div>
<div class="t" style="left:157px;top:1023px;font-size:10.8px;color:#e0e0e0">Grid:100mil</div>
<div class="a" style="left:486px;top:1020px;width:1px;height:16px;background:#2c2c2c"></div>
<div class="a" style="left:972px;top:1020px;width:1px;height:16px;background:#2c2c2c"></div>
<div class="a" style="left:1870px;top:1019px;width:45px;height:19px;background:#4a4a4a;border:1px solid #2c2c2c;border-radius:2px"></div>
<div class="t" style="left:1876px;top:1023px;font-size:11px;color:#f0f0f0">Panels</div>
<!-- right panel -->
<div class="a" style="left:1598px;top:48px;width:322px;height:945px;background:#353535"></div>
<div class="a" style="left:1601px;top:51px;width:316px;height:22px;background:#4a4a4a"></div>
<div class="a" style="left:1601px;top:73px;width:316px;height:920px;background:#404040"></div>
<div class="t" style="left:1606px;top:57.31px;font-size:11.8px;color:#e4e4e4;font-weight:bold;">Properties</div>
<svg class="a" style="left:1871px;top:59px" width="8" height="7" viewBox="0 0 8 7"><path d="M0 0h8l-4 7z" fill="#eee"/></svg>
<svg class="a" style="left:1886px;top:58px" width="8" height="10" viewBox="0 0 8 10"><path d="M1.5 0.5h5v1h-1v3l1.5 1.5v1h-6v-1l1.5-1.5v-3h-1z" fill="#eee"/><path d="M4 7v3" stroke="#eee"/></svg>
<svg class="a" style="left:1903px;top:59px" width="8" height="8" viewBox="0 0 8 8"><path d="M1 1l6 6M7 1l-6 6" stroke="#eee" stroke-width="1.8"/></svg>
<div class="t" style="left:1609.5px;top:90.3px;font-size:11.7px;color:#dcdcdc;">Document Options</div>
<div class="t" style="left:1716.5px;top:90.72px;font-size:11.2px;color:#dcdcdc;">ts (and 11 more)</div>
<div class="a" style="left:1804px;top:83px;width:42px;height:26px;background:#4a4a4a;border-radius:3px;box-shadow:0 0 0 1px #232323"></div>
<div class="a" style="left:1804px;top:83px;width:28px;height:26px;background:#5e86b0;border-radius:3px 0 0 3px"></div>
<div class="a" style="left:1832px;top:83px;width:1px;height:26px;background:#2e2e2e;"></div>
<svg class="a" style="left:1812px;top:89px" width="13" height="13" viewBox="0 0 13 13"><path d="M0 0.5h13l-4.5 5v7l-4-2v-5z" fill="#f4f4f4"/></svg>
<svg class="a" style="left:1835px;top:94px" width="8" height="5" viewBox="0 0 8 5"><path d="M0 0h8l-4 5z" fill="#f0f0f0"/></svg>
<div class="a" style="left:1858px;top:83px;width:50px;height:26px;background:#474747;border-radius:3px;box-shadow:0 0 0 1px #232323"></div>
<div class="a" style="left:1884px;top:83px;width:24px;height:26px;background:#5e86b0;border-radius:0 3px 3px 0"></div>
<div class="a" style="left:1883px;top:83px;width:1px;height:26px;background:#2e2e2e;"></div>
<svg class="a" style="left:1864px;top:89px" width="14" height="14" viewBox="0 0 14 14"><path d="M2.5 8.5h-2v-8h8v2" fill="none" stroke="#f0f0f0" stroke-width="1.2"/><path d="M4.5 10.5h-2v-8h8v2" fill="none" stroke="#f0f0f0" stroke-width="1.2"/><path d="M6 6l7 3-3 1 2.5 3-1 1-2.5-3-2 2z" fill="#f0f0f0"/></svg>
<svg class="a" style="left:1889px;top:89px" width="14" height="14" viewBox="0 0 14 14"><path d="M4.5 8.5h-4v-8h8v4" fill="none" stroke="#f0f0f0" stroke-width="1.2"/><path d="M6 6l7 3-3 1 2.5 3-1 1-2.5-3-2 2z" fill="#f0f0f0"/></svg>
<div class="a" style="left:1609px;top:119px;width:300px;height:21px;background:#2b2b2b;border-radius:3px;border:1px solid #262626"></div>
<svg class="a" style="left:1617px;top:124px" width="11" height="11" viewBox="0 0 11 11"><circle cx="4.5" cy="4.5" r="3.5" fill="none" stroke="#c0c0c0" stroke-width="1.6"/><path d="M7 7l3.5 3.5" stroke="#c0c0c0" stroke-width="1.8"/></svg>
<div class="t" style="left:1635.5px;top:124.57px;font-size:11.5px;color:#d8d8d8;">Search</div>
<div class="a" style="left:1618px;top:155px;width:53px;height:18px;background:#4b4b4b;border:1px solid #2e2e2e;border-bottom:none"></div>
<div class="a" style="left:1671px;top:155px;width:70px;height:18px;background:#3a3a3a;border:1px solid #2e2e2e;border-bottom:none"></div>
<div class="t" style="left:1625.8px;top:158.37px;font-size:11.5px;color:#e4e4e4;">General</div>
<div class="t" style="left:1678.4px;top:158.37px;font-size:11.5px;color:#e4e4e4;">Parameters</div>
<div class="a" style="left:1609px;top:172px;width:300px;height:1px;background:#2e2e2e;"></div>
<svg class="a" style="left:1609px;top:186px" width="5" height="5" viewBox="0 0 5 5"><path d="M5 0v5h-5z" fill="#dcdcdc"/></svg>
<div class="t" style="left:1617.7px;top:183.49px;font-size:11px;color:#f0f0f0;font-weight:bold;">Selection Filter</div>
<div class="a" style="left:1610px;top:200px;width:297px;height:146px;background:#434343;border-radius:2px"></div>
<div class="a" style="left:1615px;top:207px;width:90px;height:23px;background:#4d4d4d;border-radius:3px;box-shadow:0 0 0 1px #232323"></div><div class="t" style="left:1560.0px;width:200px;text-align:center;top:212.17px;font-size:11.5px;color:#ececec;">All objects</div>
<div class="a" style="left:1616px;top:235px;width:82px;height:21px;background:#5e86b0;border-radius:3px;box-shadow:0 0 0 1px #232323"></div><div class="t" style="left:1557.0px;width:200px;text-align:center;top:239.87px;font-size:11.5px;color:#ececec;">Components</div>
<div class="a" style="left:1704px;top:235px;width:45px;height:21px;background:#5e86b0;border-radius:3px;box-shadow:0 0 0 1px #232323"></div><div class="t" style="left:1626.5px;width:200px;text-align:center;top:239.87px;font-size:11.5px;color:#ececec;">Wires</div>
<div class="a" style="left:1755px;top:235px;width:46px;height:21px;background:#5e86b0;border-radius:3px;box-shadow:0 0 0 1px #232323"></div><div class="t" style="left:1678.0px;width:200px;text-align:center;top:239.87px;font-size:11.5px;color:#ececec;">Buses</div>
<div class="a" style="left:1616px;top:262px;width:90px;height:21px;background:#5e86b0;border-radius:3px;box-shadow:0 0 0 1px #232323"></div><div class="t" style="left:1561.0px;width:200px;text-align:center;top:266.87px;font-size:11.5px;color:#ececec;">Sheet Symbols</div>
<div class="a" style="left:1712px;top:262px;width:83px;height:21px;background:#5e86b0;border-radius:3px;box-shadow:0 0 0 1px #232323"></div><div class="t" style="left:1653.5px;width:200px;text-align:center;top:266.87px;font-size:11.5px;color:#ececec;">Sheet Entries</div>
<div class="a" style="left:1801px;top:262px;width:69px;height:21px;background:#5e86b0;border-radius:3px;box-shadow:0 0 0 1px #232323"></div><div class="t" style="left:1735.5px;width:200px;text-align:center;top:266.87px;font-size:11.5px;color:#ececec;">Net Labels</div>
<div class="a" style="left:1616px;top:289px;width:72px;height:21px;background:#5e86b0;border-radius:3px;box-shadow:0 0 0 1px #232323"></div><div class="t" style="left:1552.0px;width:200px;text-align:center;top:293.87px;font-size:11.5px;color:#ececec;">Parameters</div>
<div class="a" style="left:1694px;top:289px;width:42px;height:21px;background:#5e86b0;border-radius:3px;box-shadow:0 0 0 1px #232323"></div><div class="t" style="left:1615.0px;width:200px;text-align:center;top:293.87px;font-size:11.5px;color:#ececec;">Ports</div>
<div class="a" style="left:1742px;top:289px;width:77px;height:21px;background:#5e86b0;border-radius:3px;box-shadow:0 0 0 1px #232323"></div><div class="t" style="left:1680.5px;width:200px;text-align:center;top:293.87px;font-size:11.5px;color:#ececec;">Power Ports</div>
<div class="a" style="left:1825px;top:289px;width:41px;height:21px;background:#5e86b0;border-radius:3px;box-shadow:0 0 0 1px #232323"></div><div class="t" style="left:1745.5px;width:200px;text-align:center;top:293.87px;font-size:11.5px;color:#ececec;">Texts</div>
<div class="a" style="left:1616px;top:316px;width:100px;height:21px;background:#5e86b0;border-radius:3px;box-shadow:0 0 0 1px #232323"></div><div class="t" style="left:1566.0px;width:200px;text-align:center;top:320.87px;font-size:11.5px;color:#ececec;">Drawing objects</div>
<div class="a" style="left:1722px;top:316px;width:46px;height:21px;background:#5e86b0;border-radius:3px;box-shadow:0 0 0 1px #232323"></div><div class="t" style="left:1645.0px;width:200px;text-align:center;top:320.87px;font-size:11.5px;color:#ececec;">Other</div>
<svg class="a" style="left:1609px;top:365px" width="5" height="5" viewBox="0 0 5 5"><path d="M5 0v5h-5z" fill="#dcdcdc"/></svg>
<div class="t" style="left:1618.2px;top:362.69px;font-size:11px;color:#f0f0f0;font-weight:bold;">General</div>
<div class="a" style="left:1610px;top:379px;width:297px;height:245px;background:#434343;border-radius:2px"></div>
<div class="t" style="left:1615.4px;top:387.57px;font-size:11.5px;color:#d4d4d4;">Units</div>
<div class="a" style="left:1615px;top:401px;width:285px;height:21px;background:#4a4a4a;border-radius:3px;box-shadow:0 0 0 1px #232323"></div>
<div class="a" style="left:1759px;top:401px;width:141px;height:21px;background:#5e86b0;border-radius:0 3px 3px 0"></div>
<div class="t" style="left:1587px;width:200px;text-align:center;top:406.57px;font-size:11.5px;color:#ececec;">mm</div>
<div class="t" style="left:1729.5px;width:200px;text-align:center;top:406.57px;font-size:11.5px;color:#ececec;">mils</div>
<div class="a" style="left:1615px;top:435px;width:285px;height:1px;background:#353535;"></div>
<div class="t" style="right:225px;top:454.07px;font-size:11.5px;color:#d4d4d4">Visible Grid</div>
<div class="a" style="left:1707px;top:448px;width:170px;height:21px;background:#2b2b2b;border-radius:3px;border:1px solid #262626"></div><div class="t" style="left:1712px;top:454.07px;font-size:11.5px;color:#f2f2f2;">100mil</div>
<div class="a" style="left:1880px;top:448px;width:20px;height:21px;background:#474747;border-radius:3px;border:1px solid #2c2c2c"></div>
<svg class="a" style="left:1884px;top:454px" width="12" height="9" viewBox="0 0 12 9"><path d="M0.5 4.5c2-4 9-4 11 0c-2 4-9 4-11 0z" fill="#f0f0f0"/><circle cx="6" cy="4.5" r="2.2" fill="#474747"/><circle cx="6" cy="4.5" r="1" fill="#f0f0f0"/></svg>
<div class="t" style="right:225px;top:477.27px;font-size:11.5px;color:#d4d4d4">Snap Grid</div>
<div class="a" style="left:1708px;top:477px;width:14px;height:14px;background:#4a4a4a;border-radius:2px;border:1px solid #2c2c2c"></div><svg class="a" style="left:1711px;top:481px" width="9" height="7" viewBox="0 0 9 7"><path d="M0.8 3.2l2.6 2.6 4.8-5" fill="none" stroke="#e8e8e8" stroke-width="1.2"/></svg>
<div class="a" style="left:1727px;top:473px;width:150px;height:21px;background:#2b2b2b;border-radius:3px;border:1px solid #262626"></div><div class="t" style="left:1732px;top:479.07px;font-size:11.5px;color:#f2f2f2;">100mil</div>
<div class="t" style="left:1885.4px;top:480.07px;font-size:11.5px;color:#9a9a9a;">G</div>
<div class="a" style="left:1708px;top:500px;width:14px;height:14px;background:#4a4a4a;border-radius:2px;border:1px solid #2c2c2c"></div><svg class="a" style="left:1711px;top:504px" width="9" height="7" viewBox="0 0 9 7"><path d="M0.8 3.2l2.6 2.6 4.8-5" fill="none" stroke="#e8e8e8" stroke-width="1.2"/></svg>
<div class="t" style="left:1727.8px;top:503.11px;font-size:11.45px;color:#dcdcdc;">Snap to Electrical Object Hotspots</div>
<div class="t" style="right:225px;top:528.07px;font-size:11.5px;color:#d4d4d4">Snap Distance</div>
<div class="a" style="left:1707px;top:523px;width:193px;height:20px;background:#2b2b2b;border-radius:3px;border:1px solid #262626"></div><div class="t" style="left:1712px;top:528.57px;font-size:11.5px;color:#f2f2f2;">100mil</div>
<div class="t" style="right:225px;top:549.27px;font-size:11.5px;color:#d4d4d4">Document Font</div>
<div class="t" style="left:1707.2px;top:549.77px;font-size:10.9px;color:#dcdcdc;">Times New Roman, 10</div>
<div class="a" style="left:1707px;top:561px;width:110px;height:0;border-top:1px dashed #bdbdbd"></div>
<div class="t" style="right:225px;top:575.27px;font-size:11.5px;color:#d4d4d4">Sheet Border</div>
<div class="a" style="left:1708px;top:572px;width:14px;height:14px;background:#4a4a4a;border-radius:2px;border:1px solid #2c2c2c"></div><svg class="a" style="left:1711px;top:576px" width="9" height="7" viewBox="0 0 9 7"><path d="M0.8 3.2l2.6 2.6 4.8-5" fill="none" stroke="#e8e8e8" stroke-width="1.2"/></svg>
<div class="a" style="left:1732px;top:569px;width:20px;height:20px;background:#555;border-radius:3px;border:1px solid #2a2a2a"></div>
<div class="a" style="left:1735px;top:572px;width:14px;height:14px;background:#000000;"></div>
<div class="t" style="right:225px;top:601.37px;font-size:11.5px;color:#d4d4d4">Sheet Color</div>
<div class="a" style="left:1708px;top:595px;width:20px;height:20px;background:#555;border-radius:3px;border:1px solid #2a2a2a"></div>
<div class="a" style="left:1711px;top:598px;width:14px;height:14px;background:#fdfaf5;"></div>
<svg class="a" style="left:1609px;top:643px" width="5" height="5" viewBox="0 0 5 5"><path d="M5 0v5h-5z" fill="#dcdcdc"/></svg>
<div class="t" style="left:1618px;top:640.39px;font-size:11px;color:#f0f0f0;font-weight:bold;">Page Options</div>
<div class="a" style="left:1610px;top:657px;width:297px;height:283px;background:#434343;border-radius:2px"></div>
<div class="t" style="left:1615.4px;top:667.06px;font-size:10.8px;color:#f0f0f0;font-weight:bold;">Formatting and Size</div>
<div class="a" style="left:1615px;top:682px;width:285px;height:21px;background:#4a4a4a;border-radius:3px;box-shadow:0 0 0 1px #232323"></div>
<div class="a" style="left:1712px;top:682px;width:93px;height:21px;background:#5e86b0;"></div>
<div class="a" style="left:1711px;top:682px;width:1px;height:21px;background:#2e2e2e;"></div>
<div class="a" style="left:1805px;top:682px;width:1px;height:21px;background:#2e2e2e;"></div>
<div class="t" style="left:1562.7px;width:200px;text-align:center;top:686.87px;font-size:11.5px;color:#e8e8e8;">Template</div>
<div class="t" style="left:1658.5px;width:200px;text-align:center;top:686.87px;font-size:11.5px;color:#e8e8e8;">Standard</div>
<div class="t" style="left:1753.1px;width:200px;text-align:center;top:686.87px;font-size:11.5px;color:#e8e8e8;">Custom</div>
<div class="t" style="right:225px;top:729.07px;font-size:11.5px;color:#d4d4d4">Sheet Size</div>
<div class="a" style="left:1708px;top:724px;width:85px;height:19px;background:#4a4a4a;border-radius:3px;border:1px solid #2e2e2e"></div><div class="t" style="left:1714px;top:729.07px;font-size:11.5px;color:#ececec;">A</div><svg class="a" style="left:1779px;top:731.5px" width="8" height="5" viewBox="0 0 8 5"><path d="M0 0h8l-4 5z" fill="#f0f0f0"/></svg>
<div class="t" style="left:1807.4px;top:729.32px;font-size:11.2px;color:#dcdcdc;">9500mil  x  7500mil</div>
<div class="t" style="right:225px;top:754.97px;font-size:11.5px;color:#d4d4d4">Orientation</div>
<div class="a" style="left:1708px;top:750px;width:192px;height:19px;background:#4a4a4a;border-radius:3px;border:1px solid #2e2e2e"></div><div class="t" style="left:1714px;top:755.07px;font-size:11.5px;color:#ececec;">Landscape</div><svg class="a" style="left:1886px;top:757.5px" width="8" height="5" viewBox="0 0 8 5"><path d="M0 0h8l-4 5z" fill="#f0f0f0"/></svg>
<div class="a" style="left:1708px;top:778px;width:14px;height:14px;background:#4a4a4a;border-radius:2px;border:1px solid #2c2c2c"></div><svg class="a" style="left:1711px;top:782px" width="9" height="7" viewBox="0 0 9 7"><path d="M0.8 3.2l2.6 2.6 4.8-5" fill="none" stroke="#e8e8e8" stroke-width="1.2"/></svg>
<div class="t" style="left:1727.3px;top:779.87px;font-size:11.5px;color:#dcdcdc;">Title Block</div>
<div class="a" style="left:1812px;top:775px;width:88px;height:19px;background:#4a4a4a;border-radius:3px;border:1px solid #2e2e2e"></div><div class="t" style="left:1818px;top:780.07px;font-size:11.5px;color:#ececec;">Standard</div><svg class="a" style="left:1886px;top:782.5px" width="8" height="5" viewBox="0 0 8 5"><path d="M0 0h8l-4 5z" fill="#f0f0f0"/></svg>
<div class="a" style="left:1615px;top:809px;width:285px;height:1px;background:#353535;"></div>
<div class="t" style="left:1615.4px;top:823.92px;font-size:11.2px;color:#f0f0f0;font-weight:bold;">Margin and Zones</div>
<div class="a" style="left:1708px;top:840px;width:14px;height:14px;background:#4a4a4a;border-radius:2px;border:1px solid #2c2c2c"></div><svg class="a" style="left:1711px;top:844px" width="9" height="7" viewBox="0 0 9 7"><path d="M0.8 3.2l2.6 2.6 4.8-5" fill="none" stroke="#e8e8e8" stroke-width="1.2"/></svg>
<div class="t" style="left:1727.3px;top:843.07px;font-size:11.5px;color:#dcdcdc;">Show Zones</div>
<div class="t" style="right:225px;top:865.67px;font-size:11.5px;color:#d4d4d4">Vertical</div>
<div class="a" style="left:1707px;top:860px;width:193px;height:19px;background:#2b2b2b;border-radius:3px;border:1px solid #262626"></div><div class="t" style="left:1712px;top:865.07px;font-size:11.5px;color:#f2f2f2;">4</div>
<div class="t" style="right:225px;top:890.07px;font-size:11.5px;color:#d4d4d4">Horizontal</div>
<div class="a" style="left:1707px;top:885px;width:193px;height:19px;background:#2b2b2b;border-radius:3px;border:1px solid #262626"></div><div class="t" style="left:1712px;top:890.07px;font-size:11.5px;color:#f2f2f2;">4</div>
<div class="t" style="right:225px;top:914.82px;font-size:11.5px;color:#d4d4d4">Origin</div>
<div class="a" style="left:1708px;top:910px;width:192px;height:19px;background:#4a4a4a;border-radius:3px;border:1px solid #2e2e2e"></div><div class="t" style="left:1714px;top:915.07px;font-size:11.5px;color:#ececec;">Upper Left</div><svg class="a" style="left:1886px;top:917.5px" width="8" height="5" viewBox="0 0 8 5"><path d="M0 0h8l-4 5z" fill="#f0f0f0"/></svg>
<div class="t" style="left:1610px;top:977.95px;font-size:11.75px;color:#dcdcdc;">Nothing selected</div>
<div class="a" style="left:1601px;top:993px;width:57px;height:18px;background:#353535;border:1px solid #2a2a2a"></div>
<div class="a" style="left:1658px;top:992px;width:64px;height:19px;background:#3f3f3f;"></div>
<div class="t" style="left:1608.3px;top:999.07px;font-size:11.5px;color:#e0e0e0;">Libraries</div>
<div class="t" style="left:1664.6px;top:999.07px;font-size:11.5px;color:#ececec;">Properties</div>
</body></html>
